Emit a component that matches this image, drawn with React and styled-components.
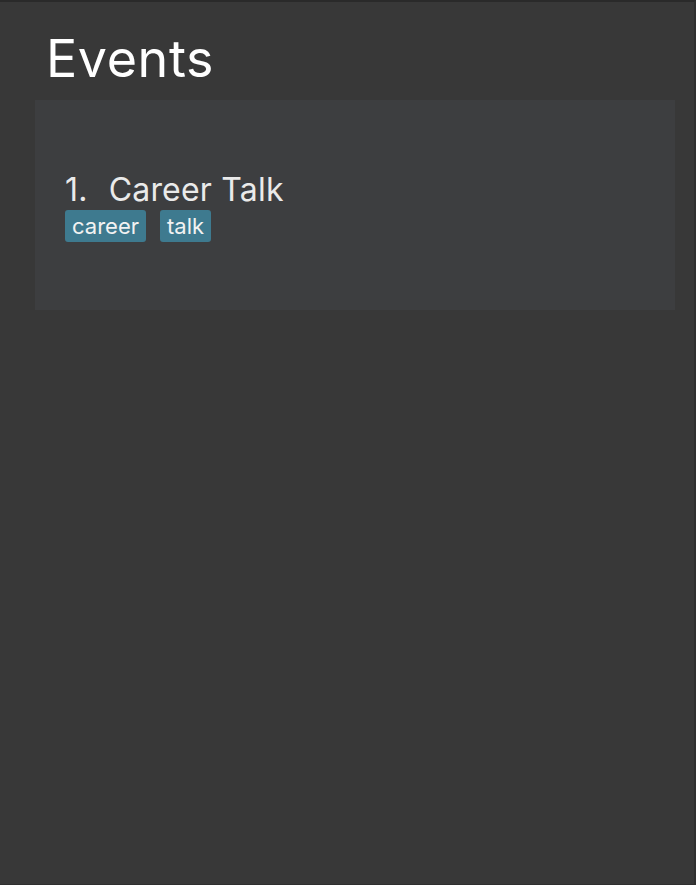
import React from 'react';
import styled, { createGlobalStyle } from 'styled-components';

const GlobalStyle = createGlobalStyle`
  html, body {
    margin: 0;
    padding: 0;
    background: #383838;
  }
  body {
    font-family: 'Inter', 'Noto Sans', sans-serif;
  }
`;

// Window frame
const Frame = styled.div`
  box-sizing: border-box;
  width: 696px;
  height: 885px;
  background: #383838;
  border-top: 2px solid #2a2a2a;
  border-right: 2px solid #2f2f2f;
  border-bottom: 1px solid #2f2f2f;
  padding: 0 19px 0 35px;
`;

const Heading = styled.h1`
  margin: 0;
  padding: 23px 0 0 11px;
  height: 98px;
  box-sizing: border-box;
  font-size: 52px;
  font-weight: 400;
  letter-spacing: 0.6px;
  color: #ffffff;
  line-height: 1.3;
`;

const Panel = styled.div`
  height: 210px;
  background: #3d3e40;
  display: flex;
  flex-direction: column;
  justify-content: center;
  padding: 4px 30px 0;
  box-sizing: border-box;
`;

const Item = styled.div`
  display: flex;
  flex-direction: column;
  gap: 3px;
`;

const ItemTitle = styled.div`
  display: flex;
  gap: 21px;
  font-size: 32px;
  letter-spacing: 0.2px;
  color: #eaeaea;
  line-height: 1.1;
`;

const Tags = styled.div`
  display: flex;
  gap: 14px;
`;

const Tag = styled.span`
  background: #3e7a8f;
  color: #f2f2f2;
  font-size: 22px;
  line-height: 32px;
  padding: 0 7px;
  border-radius: 3px;
`;

const events = [{ name: 'Career Talk', tags: ['career', 'talk'] }];

const App = () => (
  <>
    <GlobalStyle />
    <Frame>
      <Heading>Events</Heading>
      <Panel>
        {events.map((ev, i) => (
          <Item key={ev.name}>
            <ItemTitle>
              <span>{i + 1}.</span>
              <span>{ev.name}</span>
            </ItemTitle>
            <Tags>
              {ev.tags.map((t) => (
                <Tag key={t}>{t}</Tag>
              ))}
            </Tags>
          </Item>
        ))}
      </Panel>
    </Frame>
  </>
);

export default App;
